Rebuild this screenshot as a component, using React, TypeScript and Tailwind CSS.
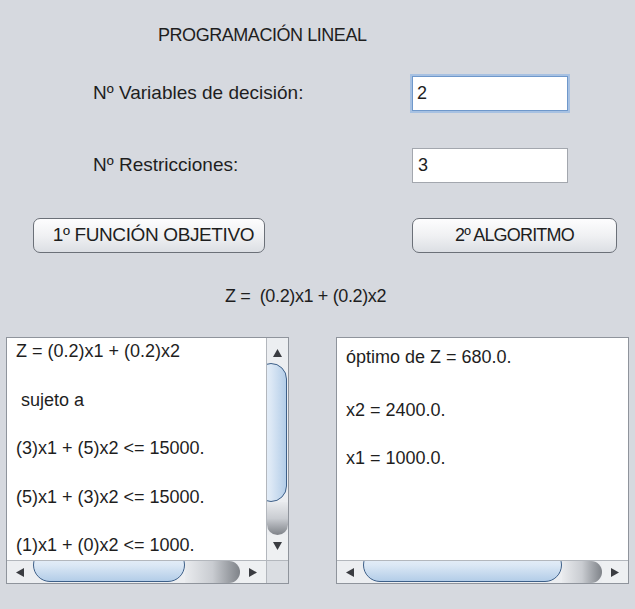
import React from "react";

function Arrow({ dir }: { dir: "up" | "down" | "left" | "right" }) {
  const pts = {
    up: "4.5,0 9,8 0,8",
    down: "0,0 9,0 4.5,8",
    left: "0,4.5 8,0 8,9",
    right: "0,0 8,4.5 0,9",
  }[dir];
  const vertical = dir === "up" || dir === "down";
  return (
    <svg width={vertical ? 9 : 8} height={vertical ? 8 : 9} viewBox={vertical ? "0 0 9 8" : "0 0 8 9"}>
      <polygon points={pts} fill="#3a3c41" />
    </svg>
  );
}

function HScroll({ thumb }: { thumb: string }) {
  return (
    <div className="flex flex-1 h-[23px] items-end overflow-hidden border-t border-[#b3b7bd] bg-[#eceef1]">
      <div className="w-[26px] h-full shrink-0 flex items-center justify-center">
        <Arrow dir="left" />
      </div>
      <div
        className={`${thumb} h-[34px] mb-[1px] shrink-0 rounded-full border-[1.5px] border-[#3d5f88] bg-linear-to-b from-[#f3f7fc] via-[#dce8f5] to-[#b3cde8]`}
      />
      <div className="flex-1 h-full rounded-r-[16px] bg-linear-to-r from-[#e9ebee] via-[#c9ccd1] to-[#7f8389]" />
      <div className="w-[26px] h-full shrink-0 flex items-center justify-center bg-[#eef0f2]">
        <Arrow dir="right" />
      </div>
    </div>
  );
}

function VScroll() {
  return (
    <div className="flex flex-col w-[22px] items-end overflow-hidden border-l border-[#b3b7bd] bg-[#eceef1]">
      <div className="h-[25px] w-full shrink-0 flex items-center justify-center pt-[4px]">
        <Arrow dir="up" />
      </div>
      <div className="w-[32px] h-[139px] mr-[1px] shrink-0 rounded-full border-[1.5px] border-[#3d5f88] bg-linear-to-r from-[#f3f7fc] via-[#dce8f5] to-[#b3cde8]" />
      <div className="flex-1 w-full rounded-b-[16px] bg-linear-to-b from-[#e9ebee] via-[#c9ccd1] to-[#7f8389]" />
      <div className="h-[25px] w-full shrink-0 flex items-center justify-center bg-[#eef0f2] pb-[4px]">
        <Arrow dir="down" />
      </div>
    </div>
  );
}

function Field({ value, focused }: { value: string; focused?: boolean }) {
  return (
    <div
      className={
        focused
          ? "w-[156px] h-[35px] text-[18px] bg-white border border-[#6f98cb] ring-2 ring-[#a7c1e2] flex items-center pl-[4px]"
          : "w-[156px] h-[35px] text-[18px] bg-white border border-[#a3a7ae] flex items-center pl-[5px]"
      }
    >
      {value}
    </div>
  );
}

function Button({ label, w, text }: { label: string; w: string; text: string }) {
  return (
    <div
      className={`${w} ${text} h-[35px] rounded-[7px] border border-[#6b7078] bg-linear-to-b from-[#fdfdfe] via-[#f0f1f3] to-[#dcdfe4] flex items-center justify-center`}
    >
      {label}
    </div>
  );
}

export default function App() {
  const left = "Z = (0.2)x1 + (0.2)x2\n\n sujeto a\n\n(3)x1 + (5)x2 <= 15000.\n\n(5)x1 + (3)x2 <= 15000.\n\n(1)x1 + (0)x2 <= 1000.";
  return (
    <div className="w-[635px] h-[609px] overflow-hidden bg-[#d6d9df] text-[19px] text-[#1e1e1e] font-['Liberation_Sans',Arial,sans-serif]">
      {/* titulo */}
      <div className="pl-[158px] pt-[25px] leading-[20px] text-[18px] tracking-[-0.025em]">PROGRAMACIÓN LINEAL</div>

      {/* entradas */}
      <div className="flex items-center mt-[31px] h-[35px]">
        <div className="w-[412px] pl-[93px]">Nº Variables de decisión:</div>
        <Field value="2" focused />
      </div>
      <div className="flex items-center mt-[37px] h-[35px]">
        <div className="w-[412px] pl-[93px]">Nº Restricciones:</div>
        <Field value="3" />
      </div>

      {/* botones */}
      <div className="flex mt-[35px]">
        <div className="ml-[33px]">
          <Button label="1º FUNCIÓN OBJETIVO" w="w-[232px] pl-[9px]" text="text-[19px] tracking-[-0.02em]" />
        </div>
        <div className="ml-[147px]">
          <Button label="2º ALGORITMO" w="w-[205px]" text="text-[18px] tracking-[-0.045em]" />
        </div>
      </div>

      <div className="mt-[33px] pl-[225px] leading-[20px] whitespace-pre text-[18px] tracking-[-0.02em]">Z =  (0.2)x1 + (0.2)x2</div>

      {/* areas de texto */}
      <div className="flex mt-[31px] text-[18px]">
        <div className="ml-[6px] w-[283px] h-[247px] border border-[#8f949c] flex flex-col">
          <div className="flex flex-1 min-h-0">
            <div className="flex-1 bg-white pl-[9px] pt-[1px] whitespace-pre leading-[24.25px] overflow-hidden">
              {left}
            </div>
            <VScroll />
          </div>
          <div className="flex">
            <HScroll thumb="w-[152px]" />
            <div className="w-[22px] h-[23px] border-t border-l border-[#b3b7bd] bg-[#dadde2]" />
          </div>
        </div>

        <div className="ml-[47px] w-[293px] h-[247px] border border-[#8f949c] flex flex-col">
          <div className="flex-1 bg-white pl-[9px] pt-[7px] leading-[24px]">
            <div>óptimo de Z = 680.0.</div>
            <div className="mt-[29px]">x2 = 2400.0.</div>
            <div className="mt-[24px]">x1 = 1000.0.</div>
          </div>
          <div className="flex">
            <HScroll thumb="w-[199px]" />
          </div>
        </div>
      </div>
    </div>
  );
}
